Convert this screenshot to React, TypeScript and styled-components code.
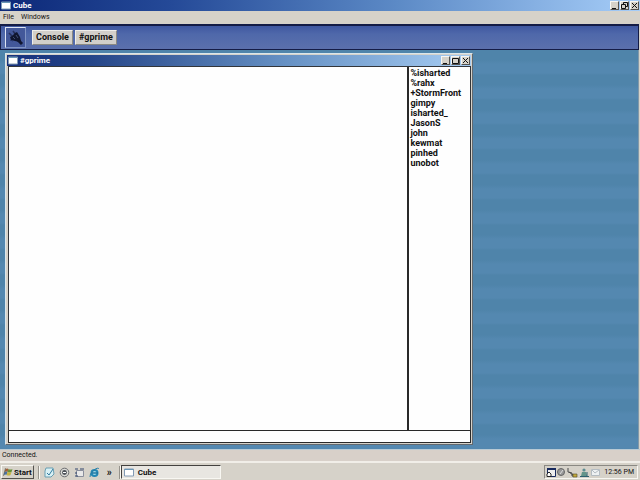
import React from "react";
import styled, { createGlobalStyle, css } from "styled-components";

const GlobalStyle = createGlobalStyle`
  * { box-sizing: border-box; }
  body { margin: 0; background: #d6d2c9; }
  body, button, input { font-family: Roboto, "Liberation Sans", sans-serif; color: #111; }
  button, input { margin: 0; padding: 0; border-radius: 0; }
`;

const raised = css`
  border: 1px solid;
  border-color: #f8f7f2 #55534f #55534f #f8f7f2;
`;

const sunken = css`
  border: 1px solid;
  border-color: #8b8983 #f8f7f2 #f8f7f2 #8b8983;
`;

const Desktop = styled.div`
  display: flex;
  flex-direction: column;
  min-height: 100vh;
  overflow: hidden;
`;

const TitleBar = styled.header<{ $inner?: boolean }>`
  display: flex;
  align-items: center;
  gap: 2px;
  height: 11px;
  flex: none;
  padding: 0 1px;
  color: #fff;
  background: ${(p) =>
    p.$inner
      ? "linear-gradient(90deg, #15307c 0%, #254588 18%, #6691c4 60%, #a6ccf2 100%)"
      : "linear-gradient(90deg, #0c2878 0%, #254a98 27%, #5c8ac6 62%, #a6cdf8 100%)"};
`;

const Title = styled.h1`
  flex: 1;
  margin: 0;
  font-size: 8px;
  line-height: 11px;
  font-weight: 700;
`;

const Controls = styled.div`
  display: flex;
  gap: 1px;
`;

const ControlButton = styled.button`
  ${raised}
  display: flex;
  align-items: center;
  justify-content: center;
  width: 9px;
  height: 9px;
  background: #d6d2c9;
`;

const MenuBar = styled.nav`
  display: flex;
  gap: 7px;
  height: 13px;
  flex: none;
  padding: 0 3px;
`;

const MenuItem = styled.button`
  border: 0;
  background: none;
  font-size: 7px;
  line-height: 13px;
`;

const Toolbar = styled.div`
  display: flex;
  align-items: center;
  gap: 2px;
  height: 26px;
  flex: none;
  margin-right: 1px;
  padding: 0 4px;
  border: 1px solid #141c46;
  border-top-width: 2px;
  background: linear-gradient(#3f57a0, #4f68aa 35%, #5b70ac);
`;

const ConnectButton = styled.button`
  width: 21px;
  height: 21px;
  margin-right: 4px;
  border: 1px solid;
  border-color: #dde4f4 #8094c4 #8094c4 #dde4f4;
  background: #43589a;
`;

const ChannelButton = styled.button`
  height: 15px;
  padding: 0 3px;
  border: 1px solid;
  border-color: #efeeea #8b8983 #8b8983 #efeeea;
  background: #d2cfca;
  font-size: 9px;
  line-height: 13px;
  font-weight: 700;
`;

const Workspace = styled.main`
  display: flex;
  flex: 1;
  margin-right: 1px;
  padding: 3px 0 4px 5px;
  border-right: 1px solid #8499a8;
  background: repeating-linear-gradient(#4f84aa 0 10px, #5488b0 14px 23px, #4f84aa 25px);
`;

const ChatWindow = styled.section`
  display: flex;
  flex-direction: column;
  width: 74%;
  padding: 1px;
  border: 1px solid;
  border-color: #d9e6ec #62696f #62696f #d9e6ec;
  background: #d6d2c9;
`;

const ChatBody = styled.div`
  display: flex;
  flex: 1;
  margin-left: 1px;
  border: 1px solid #33363a;
  border-bottom: 0;
  background: #fefefe;
`;

const Messages = styled.div`
  flex: 1;
`;

const Nicknames = styled.ul`
  width: 63px;
  margin: 0;
  padding: 1px 0 0 1px;
  border-left: 2px solid #292929;
  list-style: none;
  font-size: 9px;
  line-height: 10px;
  font-weight: 700;
`;

const MessageInput = styled.input`
  height: 13px;
  flex: none;
  margin-left: 1px;
  padding: 0 2px;
  border: 1px solid #292929;
  background: #fefefe;
  font-size: 9px;
  outline: 0;
`;

const StatusBar = styled.footer`
  height: 12px;
  flex: none;
  padding: 0 2px;
  border-top: 1px solid #b9cad4;
  background: #d8d0c9;
  font-size: 7px;
  line-height: 11px;
`;

const Taskbar = styled.footer`
  display: flex;
  align-items: center;
  gap: 4px;
  height: 19px;
  flex: none;
  padding: 2px 2px 1px 1px;
  border-top: 2px solid #f1eee8;
  background: #d6d2c9;
`;

const StartButton = styled.button`
  ${raised}
  display: flex;
  align-items: center;
  gap: 1px;
  height: 14px;
  padding: 0 1px;
  background: #d6d2c9;
  font-size: 8px;
  font-weight: 700;
`;

const Divider = styled.span`
  width: 2px;
  height: 13px;
  border-left: 1px solid #96938c;
  background: #f8f7f2;
`;

const QuickLaunch = styled.div`
  display: flex;
  align-items: center;
  gap: 4px;
`;

const LaunchButton = styled.button`
  display: flex;
  justify-content: center;
  width: 11px;
  border: 0;
  background: none;
  font-size: 10px;
  line-height: 11px;
  font-weight: 700;
`;

const TaskButton = styled.button`
  ${sunken}
  display: flex;
  align-items: center;
  gap: 4px;
  width: 100px;
  height: 14px;
  margin-left: -4px;
  padding: 0 2px;
  border-top-color: #44423f;
  border-left-color: #44423f;
  background: #e8e6e1;
  font-size: 8px;
  font-weight: 700;
`;

const Tray = styled.div`
  ${sunken}
  display: flex;
  align-items: center;
  gap: 1px;
  height: 14px;
  margin-left: auto;
  padding: 0 3px 0 1px;
`;

const Clock = styled.time`
  margin-left: 3px;
  font-size: 7px;
`;

const WindowIcon = () => (
  <svg width="10" height="9" viewBox="0 0 10 9" aria-hidden="true">
    <path d="M.5 1h9v7h-9z" fill="#fff" stroke="#829bb5" />
    <path d="M1 1h8v1H1z" fill="#6a98b6" />
  </svg>
);

const PlugIcon = () => (
  <svg width="19" height="19" viewBox="0 0 19 19" aria-hidden="true">
    <path d="M3 5l4 4M7 3l3 4" stroke="#25305c" strokeWidth="1.6" />
    <path d="M4 9l2-1 3-3 2-1 3 5 1 4-2 1-4-1-4-1z" fill="#10162f" />
    <path d="M12 12l4 4" stroke="#10162f" strokeWidth="3" />
    <path d="M4 12l3 1" stroke="#28366a" />
    <path d="M7 9l2 2M10 7l2 3" stroke="#53648e" strokeWidth=".7" />
  </svg>
);

type Glyph = "min" | "max" | "restore" | "close";

const glyphs: Record<Glyph, string> = {
  min: "M1 6.5h4",
  max: "M.5 1.5h6v5h-6z",
  restore: "M2.5 2.5v-2h4v4h-2M.5 2.5h4v4h-4z",
  close: "M1 1l5 5M6 1l-5 5",
};

const WindowButton = ({ glyph, label }: { glyph: Glyph; label: string }) => (
  <ControlButton type="button" aria-label={label}>
    <svg width="7" height="7" viewBox="0 0 7 7" aria-hidden="true">
      <path d={glyphs[glyph]} fill="none" stroke="#111" strokeWidth="1" />
    </svg>
  </ControlButton>
);

const FlagIcon = () => (
  <svg width="10" height="10" viewBox="0 0 9 10" aria-hidden="true">
    <path d="M2 2q2-1 3 0L4 5Q3 4 1 5z" fill="#a35f37" />
    <path d="M5 2q2 1 4 0L8 5Q6 6 4 5z" fill="#679039" />
    <path d="M1 5q2-1 3 0L3 8Q2 7 0 8z" fill="#4670a4" />
    <path d="M4 5q2 1 4 0L7 8Q5 9 3 8z" fill="#c5b33f" />
    <path d="M2 1L0 9" stroke="#565546" strokeWidth=".6" />
  </svg>
);

const NotesIcon = () => (
  <svg width="11" height="11" viewBox="0 0 11 11" aria-hidden="true">
    <path d="M2 1h7l1 6-3 3H1V4z" fill="#d8f0f4" stroke="#6a9fb2" />
    <path d="M3 6l2 2 4-6" fill="none" stroke="#337ca0" />
  </svg>
);

const MediaIcon = () => (
  <svg width="11" height="11" viewBox="0 0 11 11" aria-hidden="true">
    <circle cx="5.5" cy="5.5" r="4.3" fill="#d9d9d5" stroke="#6b6d70" />
    <circle cx="5.5" cy="5.5" r="2.4" fill="#4b5056" />
    <path d="M4 5.5h3" stroke="#fff" />
  </svg>
);

const ShowDesktopIcon = () => (
  <svg width="11" height="11" viewBox="0 0 11 11" aria-hidden="true">
    <path d="M2.5 3.5h7v6h-7z" fill="#e8e8e8" stroke="#8a8f9c" />
    <path d="M1 2h3M6 2h4M1 6h2M1 9h3" stroke="#30446c" />
  </svg>
);

const BrowserIcon = () => (
  <svg width="11" height="11" viewBox="0 0 11 11" aria-hidden="true">
    <circle cx="5.5" cy="6" r="3" fill="#a3d9e8" stroke="#2387b4" strokeWidth="2" />
    <path d="M3 6h6" stroke="#1d739e" strokeWidth="1.4" />
    <path d="M1 10Q0 7 5 3q4-3 5-1" fill="none" stroke="#277ea6" />
  </svg>
);

const TrayIcons = () => (
  <svg width="54" height="11" viewBox="0 0 54 11" aria-hidden="true">
    <path d="M1.5 2.5h8v7h-8z" fill="#eee" stroke="#182a5d" />
    <path d="M1 2h9" stroke="#182a5d" strokeWidth="2" />
    <path d="M1 9.500V7l2-2 2 2v2.500z" fill="#fff" stroke="#252525" />
    <circle cx="15" cy="5" r="3.5" fill="#999" stroke="#666" />
    <path d="M14 7l3-4" stroke="#ddd" />
    <path d="M22 1v4l4 1v3h4M23 5l4 3" fill="none" stroke="#484848" />
    <path d="M27 7h4v3h-4z" fill="#c4aa3d" stroke="#514a25" strokeWidth=".6" />
    <circle cx="38" cy="3" r="1.6" fill="#5c8d92" />
    <path d="M36 5h4l1 4h-6z" fill="#64958a" />
    <path d="M34 9.5h9M41 5v4" stroke="#2e6170" />
    <path d="M45.5 2.5h8v6h-8z" fill="#eef1f2" stroke="#b4bcc2" />
    <path d="M46 3l3 3 4-3" fill="none" stroke="#b4bcc2" />
  </svg>
);

const channels = ["Console", "#gprime"];

const nicknames = [
  "%isharted",
  "%rahx",
  "+StormFront",
  "gimpy",
  "isharted_",
  "JasonS",
  "john",
  "kewmat",
  "pinhed",
  "unobot",
];

const launchers = [
  { label: "Notes", Icon: NotesIcon },
  { label: "Media player", Icon: MediaIcon },
  { label: "Show desktop", Icon: ShowDesktopIcon },
  { label: "Browser", Icon: BrowserIcon },
];

export default function App() {
  return (
    <Desktop>
      <GlobalStyle />
      <TitleBar>
        <WindowIcon />
        <Title>Cube</Title>
        <Controls>
          <WindowButton glyph="min" label="Minimize" />
          <WindowButton glyph="restore" label="Restore" />
          <WindowButton glyph="close" label="Close" />
        </Controls>
      </TitleBar>
      <MenuBar>
        <MenuItem type="button">File</MenuItem>
        <MenuItem type="button">Windows</MenuItem>
      </MenuBar>
      <Toolbar>
        <ConnectButton type="button" aria-label="Connect">
          <PlugIcon />
        </ConnectButton>
        {channels.map((name) => (
          <ChannelButton type="button" key={name}>
            {name}
          </ChannelButton>
        ))}
      </Toolbar>
      <Workspace>
        <ChatWindow>
          <TitleBar $inner>
            <WindowIcon />
            <Title as="h2">#gprime</Title>
            <Controls>
              <WindowButton glyph="min" label="Minimize channel" />
              <WindowButton glyph="max" label="Maximize channel" />
              <WindowButton glyph="close" label="Close channel" />
            </Controls>
          </TitleBar>
          <ChatBody>
            <Messages role="log" />
            <Nicknames>
              {nicknames.map((nick) => (
                <li key={nick}>{nick}</li>
              ))}
            </Nicknames>
          </ChatBody>
          <MessageInput type="text" aria-label="Message" />
        </ChatWindow>
      </Workspace>
      <StatusBar>Connected.</StatusBar>
      <Taskbar>
        <StartButton type="button">
          <FlagIcon />
          Start
        </StartButton>
        <Divider />
        <QuickLaunch>
          {launchers.map(({ label, Icon }) => (
            <LaunchButton type="button" aria-label={label} key={label}>
              <Icon />
            </LaunchButton>
          ))}
          <LaunchButton type="button">»</LaunchButton>
        </QuickLaunch>
        <Divider />
        <TaskButton type="button">
          <WindowIcon />
          Cube
        </TaskButton>
        <Tray>
          <TrayIcons />
          <Clock>12:56 PM</Clock>
        </Tray>
      </Taskbar>
    </Desktop>
  );
}
